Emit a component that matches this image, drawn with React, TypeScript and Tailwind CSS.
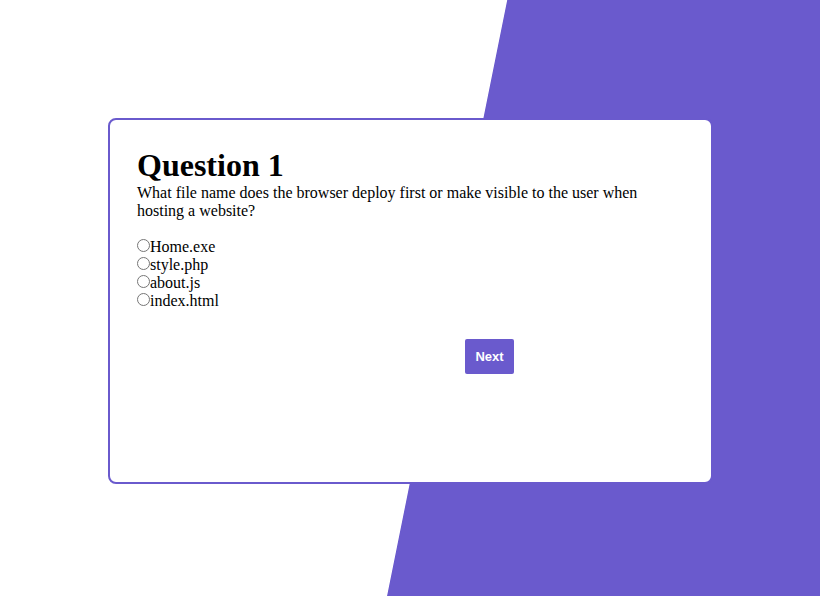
import React, { useState } from "react";

const options: string[] = ["Home.exe", "style.php", "about.js", "index.html"];

export default function App() {
  const [selected, setSelected] = useState<string>("");

  return (
    <main className="flex min-h-screen items-center justify-center bg-[linear-gradient(101.4deg,#ffffff_53.9%,#6a5acd_54%)] pt-[6px] pr-[107px] pl-[108px] font-['Liberation_Serif',serif] text-black">
      <form
        className="min-h-[366px] w-full max-w-[605px] rounded-lg border-2 border-[#6a5acd] bg-white px-[27px] pt-7"
        onSubmit={(event) => event.preventDefault()}
      >
        <h1 className="mb-0.5 text-[32px] leading-[34px] font-bold">Question 1</h1>
        <p id="question" className="text-base leading-[18px]">
          What file name does the browser deploy first or make visible to the user when hosting a website?
        </p>
        <div role="radiogroup" aria-labelledby="question" className="mt-[18px] flex flex-col items-start">
          {options.map((option) => (
            <label key={option} className="flex h-[18px] items-start text-base leading-[18px]">
              <input
                type="radio"
                name="answer"
                value={option}
                checked={selected === option}
                onChange={() => setSelected(option)}
                className="mt-px size-[13px]"
              />
              {option}
            </label>
          ))}
        </div>
        <div className="mt-[29px] flex justify-end pr-[170px]">
          <button
            type="submit"
            className="w-[49px] rounded-xs bg-[#6a5acd] py-2.5 text-center font-['Liberation_Sans',sans-serif] text-[13px] leading-[15px] font-bold text-white"
          >
            Next
          </button>
        </div>
      </form>
    </main>
  );
}
